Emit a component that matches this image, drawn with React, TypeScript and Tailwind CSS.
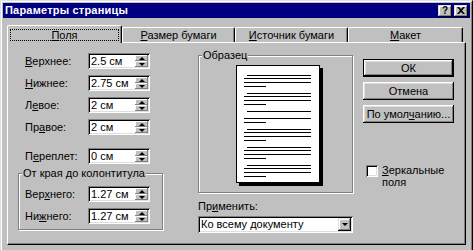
import React from "react";

const raised =
  "shadow-[inset_-1px_-1px_0_#000,inset_1px_1px_0_#fff,inset_-2px_-2px_0_#808080,inset_2px_2px_0_#dfdfdf]";
const raisedSmall =
  "shadow-[inset_-1px_-1px_0_#000,inset_1px_1px_0_#dfdfdf,inset_-2px_-2px_0_#808080,inset_2px_2px_0_#fff]";
const sunken =
  "shadow-[inset_1px_1px_0_#808080,inset_-1px_-1px_0_#fff,inset_2px_2px_0_#000,inset_-2px_-2px_0_#dfdfdf]";

function Up() {
  return <div className="h-0 w-0 border-x-[3px] border-b-[3px] border-x-transparent border-b-black" />;
}
function Down() {
  return <div className="h-0 w-0 border-x-[3px] border-t-[3px] border-x-transparent border-t-black" />;
}

function Spin({ value }: { value: string }) {
  return (
    <div className={`flex h-[16px] w-[62px] bg-white p-[2px] ${sunken}`}>
      <div className="flex-1 pl-[1px] text-[11px] leading-[12px]">{value}</div>
      <div className="flex w-[13px] flex-col">
        <div className="flex h-[6px] items-center justify-center bg-[#c0c0c0] shadow-[inset_-1px_-1px_0_#808080,inset_1px_1px_0_#fff]">
          <Up />
        </div>
        <div className="flex h-[6px] items-center justify-center bg-[#c0c0c0] shadow-[inset_-1px_-1px_0_#808080,inset_1px_1px_0_#fff]">
          <Down />
        </div>
      </div>
    </div>
  );
}

function Row({ label, value, mt = "" }: { label: React.ReactNode; value: string; mt?: string }) {
  return (
    <div className={`flex h-[16px] items-center ${mt}`}>
      <div className="w-[70px] pl-[7px] leading-[12px]">{label}</div>
      <Spin value={value} />
    </div>
  );
}

function U({ children }: { children: React.ReactNode }) {
  return <span className="underline decoration-1 underline-offset-[1px]">{children}</span>;
}

function Btn({ children, def = false, mt = "" }: { children: React.ReactNode; def?: boolean; mt?: string }) {
  return def ? (
    <div className={`h-[18px] w-[91px] border border-black ${mt}`}>
      <div className={`flex h-full w-full items-center justify-center bg-[#c0c0c0] leading-[12px] ${raised}`}>{children}</div>
    </div>
  ) : (
    <div className={`flex h-[18px] w-[91px] items-center justify-center bg-[#c0c0c0] leading-[12px] ${raised} ${mt}`}>
      {children}
    </div>
  );
}

function PagePreview() {
  const paras = [10, 28, 46, 64, 82, 100];
  return (
    <svg width="87" height="121" viewBox="0 0 87 121">
      <rect x="84" y="3" width="3" height="118" fill="#000" />
      <rect x="3" y="118" width="84" height="3" fill="#000" />
      <rect x="0.5" y="0.5" width="83" height="117" fill="#fff" stroke="#000" />
      {paras.map((y, i) =>
        i === 2 ? (
          <g key={y}>
            <rect x="11" y={y} width="64" height="1" fill="#000" />
            <rect x="8" y={y + 7} width="67" height="1" fill="#000" />
            <rect x="8" y={y + 11} width="22" height="1" fill="#000" />
          </g>
        ) : (
          <g key={y}>
            <rect x="11" y={y} width="64" height="1" fill="#000" />
            <rect x="8" y={y + 3} width="67" height="1" fill="#000" />
            <rect x="8" y={y + 7} width="67" height="1" fill="#000" />
            <rect x="8" y={y + 11} width="22" height="1" fill="#000" />
          </g>
        )
      )}
    </svg>
  );
}

export default function App() {
  return (
    <div className="h-[250px] w-[473px] overflow-hidden bg-[#c0c0c0] font-['Liberation_Sans',Arial,sans-serif] text-[11px] text-black">
      <div className="h-[258px] border border-b-black border-l-[#dfdfdf] border-r-black border-t-[#dfdfdf]">
        <div className="flex h-full flex-col border border-b-[#808080] border-l-white border-r-[#808080] border-t-white p-[1px]">
          {/* Title bar */}
          <div className="flex h-[15px] items-center bg-[#000080] pl-[2px] pr-[2px]">
            <div className="flex-1 text-[11px] font-bold leading-[15px] tracking-[0.2px] text-white">Параметры страницы</div>
            <div className={`flex h-[12px] w-[14px] items-center justify-center bg-[#c0c0c0] ${raisedSmall}`}>
              <span className="text-[10px] font-bold leading-[10px]">?</span>
            </div>
            <div className={`ml-[2px] flex h-[12px] w-[14px] items-center justify-center bg-[#c0c0c0] ${raisedSmall}`}>
              <svg width="8" height="7" viewBox="0 0 8 7">
                <path d="M0 0h2l2 2 2-2h2L5 3.5 8 7H6L4 5 2 7H0l3-3.5z" fill="#000" />
              </svg>
            </div>
          </div>

          {/* Tabs */}
          <div className="ml-[4px] mt-[7px] flex h-[17px] items-end">
            <div className="relative z-10 -mb-px h-[18px] w-[115px] rounded-tl-[2px] rounded-tr-[2px] border-l border-r border-t border-l-white border-r-black border-t-white bg-[#c0c0c0] px-[2px] pt-[3px] shadow-[inset_-1px_0_0_#808080]">
              <div className="flex h-[12px] items-center justify-center border border-dotted border-black leading-[11px]">
                <U>П</U>оля
              </div>
            </div>
            <div className="flex h-[15px] w-[113px] items-center justify-center rounded-tl-[2px] rounded-tr-[2px] border-l border-r border-t border-l-white border-r-black border-t-white leading-[12px] shadow-[inset_-1px_0_0_#808080]">
              <span>
                <U>Р</U>азмер бумаги
              </span>
            </div>
            <div className="flex h-[15px] w-[113px] items-center justify-center rounded-tl-[2px] rounded-tr-[2px] border-l border-r border-t border-l-white border-r-black border-t-white leading-[12px] shadow-[inset_-1px_0_0_#808080]">
              <span>
                <U>И</U>сточник бумаги
              </span>
            </div>
            <div className="flex h-[15px] w-[115px] items-center justify-center rounded-tl-[2px] rounded-tr-[2px] border-l border-r border-t border-l-white border-r-black border-t-white leading-[12px] shadow-[inset_-1px_0_0_#808080]">
              <span>
                <U>М</U>акет
              </span>
            </div>
          </div>

          {/* Panel */}
          <div className="ml-[4px] flex h-[203px] w-[459px] border border-b-black border-l-white border-r-black border-t-white shadow-[inset_-1px_-1px_0_#808080]">
            {/* Left column */}
            <div className="ml-[10px] mt-[10px] flex w-[145px] flex-col">
              <Row label={<><U>В</U>ерхнее:</>} value="2.5 см" />
              <Row label={<><U>Н</U>ижнее:</>} value="2.75 см" mt="mt-[6px]" />
              <Row label={<>Л<U>е</U>вое:</>} value="2 см" mt="mt-[6px]" />
              <Row label={<>Пр<U>а</U>вое:</>} value="2 см" mt="mt-[6px]" />
              <Row label={<>П<U>е</U>реплет:</>} value="0 см" mt="mt-[13px]" />
              <div className="relative mt-[9px] h-[57px] w-[145px] border border-[#808080] pt-[12px] shadow-[inset_1px_1px_0_#fff,1px_1px_0_#fff]">
                <div className="absolute -top-[7px] left-[3px] bg-[#c0c0c0] px-[1px] leading-[12px]">От края до колонтитула</div>
                <div className="-ml-px flex flex-col">
                  <Row label={<>Вер<U>х</U>него:</>} value="1.27 см" />
                  <Row label={<>Ни<U>ж</U>него:</>} value="1.27 см" mt="mt-[6px]" />
                </div>
              </div>
            </div>

            {/* Middle column */}
            <div className="ml-[35px] mt-[12px] flex w-[155px] flex-col">
              <div className="relative h-[138px] w-[155px] border border-[#808080] pl-[37px] pt-[9px] shadow-[inset_1px_1px_0_#fff,1px_1px_0_#fff]">
                <div className="absolute -top-[7px] left-[3px] bg-[#c0c0c0] px-[1px] leading-[12px]">Образец</div>
                <PagePreview />
              </div>
              <div className="mt-[7px] leading-[12px]">
                Пр<U>и</U>менить:
              </div>
              <div className={`mt-[4px] flex h-[17px] w-[155px] bg-white p-[2px] ${sunken}`}>
                <div className="flex-1 pl-[1px] leading-[13px]">Ко всему документу</div>
                <div className={`flex w-[13px] items-center justify-center bg-[#c0c0c0] ${raisedSmall}`}>
                  <Down />
                </div>
              </div>
            </div>

            {/* Right column */}
            <div className="ml-[10px] mt-[16px] flex flex-col">
              <Btn def>ОК</Btn>
              <Btn mt="mt-[5px]">Отмена</Btn>
              <Btn mt="mt-[5px]">
                <span>
                  По умол<U>ч</U>анию...
                </span>
              </Btn>
              <div className="ml-[3px] mt-[41px] flex items-start">
                <div className={`mt-[1px] h-[12px] w-[12px] bg-white ${sunken}`} />
                <div className="ml-[4px] leading-[12px]">
                  <U>З</U>еркальные
                  <br />
                  поля
                </div>
              </div>
            </div>
          </div>
        </div>
      </div>
    </div>
  );
}
